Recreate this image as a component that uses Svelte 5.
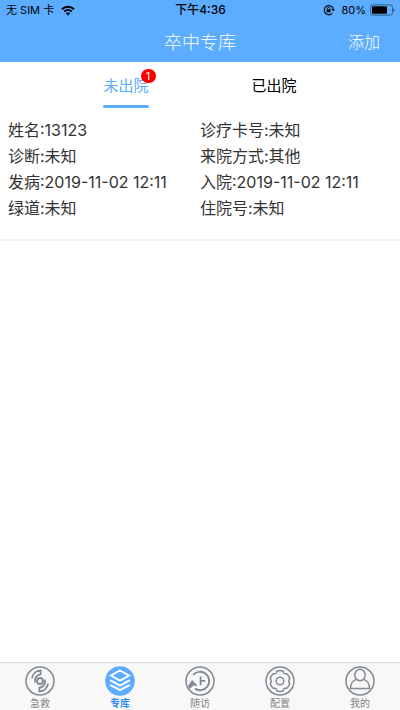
<script>
    let tab = $state('in')
    let page = $state('专库')

    const tabs = [
        { key: 'in', text: '未出院', count: 1 },
        { key: 'out', text: '已出院', count: 0 }
    ]
    const patients = [
        {
            fields: [
                ['姓名', '13123'],
                ['诊疗卡号', '未知'],
                ['诊断', '未知'],
                ['来院方式', '其他'],
                ['发病', '2019-11-02 12:11'],
                ['入院', '2019-11-02 12:11'],
                ['绿道', '未知'],
                ['住院号', '未知']
            ]
        }
    ]
    const pages = ['急救', '专库', '随访', '配置', '我的']
</script>

<div class="app">
    <header>
        <div class="status">
            <div class="carrier">
                <span>无 SIM 卡</span>
                <svg width="14" height="11" viewBox="0 0 14 11" fill="none" stroke="#000" stroke-width="2">
                    <path d="M1 4.2a8.6 8.6 0 0 1 12 0" />
                    <path d="M3.3 6.6a5.3 5.3 0 0 1 7.4 0" />
                    <path d="M7 10.6 4.8 8.4a3.2 3.2 0 0 1 4.4 0z" fill="#000" stroke="none" />
                </svg>
            </div>
            <div class="clock">下午4:36</div>
            <div class="power">
                <svg class="lock" width="12" height="12" viewBox="0 0 12 12" fill="none" stroke="#000">
                    <path d="M9.2 9.4A4.6 4.6 0 1 1 10.3 5" stroke-width="1.1" />
                    <path d="M8.6 5h3.2l-1.6 2.4z" fill="#000" stroke="none" />
                    <path d="M3.6 5.4h4v3h-4z" fill="#000" stroke="none" />
                    <path d="M4.4 5.6V4.5a1.2 1.2 0 0 1 2.4 0v1.1" stroke-width=".9" />
                </svg>
                <span>80%</span>
                <svg width="25" height="12" viewBox="0 0 25 12">
                    <rect x=".5" y=".8" width="22" height="10.4" rx="2.6" fill="none" stroke="#2f587f" stroke-width=".9" />
                    <rect x="2" y="2.3" width="15" height="7.4" rx="1" />
                    <path d="M23.4 4.2q1.4.6 1.4 1.8t-1.4 1.8z" fill="#2f587f" />
                </svg>
            </div>
        </div>
        <div class="nav">
            <h1>卒中专库</h1>
            <button class="add">添加</button>
        </div>
    </header>

    <div class="tabs">
        {#each tabs as item}
            <button class="tab" class:active={tab === item.key} onclick={() => (tab = item.key)}>
                <span class="label">
                    {item.text}
                    {#if item.count}
                        <span class="badge">{item.count}</span>
                    {/if}
                </span>
            </button>
        {/each}
    </div>

    <main>
        {#if tab === 'in'}
            {#each patients as patient}
                <div class="patient">
                    {#each patient.fields as [name, value]}
                        <div>{name}:{value}</div>
                    {/each}
                </div>
            {/each}
        {/if}
    </main>

    <footer>
        {#each pages as name, i}
            <button class="item" class:current={page === name} onclick={() => (page = name)}>
                <svg width="30" height="30" viewBox="0 0 30 30" fill="none" stroke="currentColor" stroke-width="1.5">
                    <circle cx="15" cy="15" r="14" fill={page === name ? 'currentColor' : 'none'} />
                    {#if i === 0}
                        <circle cx="15" cy="15" r="2.9" stroke-width="2" />
                        {#each [0, 180] as angle}
                            <path
                                d="M7 12.4C7.6 8 11 4.8 15.6 4.4V8.2C11.4 9 9.2 12 10.2 16.4"
                                stroke-width="1.9"
                                stroke-linejoin="round"
                                transform="rotate({angle} 15 15)"
                            />
                        {/each}
                    {:else if i === 1}
                        <g class="layers" stroke-width="2">
                            <path d="M15 4.5 24 9.5 15 14.5 6 9.5z" />
                            <path d="M5 14.2l10 5.4 10-5.4" />
                            <path d="M5 18.8l10 5.4 10-5.4" />
                        </g>
                    {:else if i === 2}
                        <path d="M8 9A9.2 9.2 0 1 1 9.8 22.6" stroke-width="1.9" />
                        <path d="M15.6 10.6v8.6M15.6 14.9h4.6" stroke-width="1.8" />
                        <path d="M7.2 14.6 12 19.4 8.2 19.2 5 22.4 3.4 19.8z" fill="currentColor" stroke-width=".8" />
                    {:else if i === 3}
                        <circle cx="15" cy="15" r="3.8" />
                        <path
                            d="M11.8 5.2Q15 4 18.2 5.2Q18.4 8.6 21.6 7.6Q24 9.6 24.9 12.4Q22.4 15 24.9 17.6Q24 20.4 21.6 22.4Q18.4 21.4 18.2 24.8Q15 26 11.8 24.8Q11.6 21.4 8.4 22.4Q6 20.4 5.1 17.6Q7.6 15 5.1 12.4Q6 9.6 8.4 7.6Q11.6 8.6 11.8 5.2z"
                            stroke-linejoin="round"
                        />
                    {:else}
                        <ellipse cx="15" cy="9" rx="5.2" ry="5.8" />
                        <path d="M11.4 13.4c-4 1.4-6 4.6-6 9h19.2c0-4.4-2-7.6-6-9" stroke-linejoin="round" />
                    {/if}
                </svg>
                <span>{name}</span>
            </button>
        {/each}
    </footer>
</div>

<style>
    :global(body) {
        margin: 0;
        background: #fff;
    }
    .app {
        display: flex;
        flex-direction: column;
        min-height: 100vh;
        font-family: Inter, "Noto Sans CJK SC", sans-serif;
        color: #333;
    }
    button {
        margin: 0;
        padding: 0;
        border: 0;
        background: none;
        font: inherit;
        color: inherit;
        cursor: pointer;
    }
    header {
        background: #5cacff;
    }
    .status {
        display: grid;
        grid-template-columns: 1fr auto 1fr;
        align-items: center;
        height: 20px;
        padding: 0 5px 0 6px;
        font-size: 11px;
        line-height: 20px;
        color: #000;
    }
    .carrier,
    .power {
        display: flex;
        align-items: center;
        gap: 7px;
    }
    .power {
        justify-content: flex-end;
        gap: 4px;
    }
    .lock {
        margin-right: 2px;
    }
    .clock {
        font-size: 12px;
        font-weight: 500;
    }
    .nav {
        display: grid;
        grid-template-columns: 1fr auto 1fr;
        align-items: center;
        height: 42px;
        padding: 0 20px;
        color: #fff;
    }
    h1 {
        grid-column: 2;
        margin: 0;
        font-size: 18px;
        font-weight: 300;
    }
    .add {
        justify-self: end;
        font-size: 16px;
        font-weight: 300;
    }
    .tabs {
        display: flex;
        padding: 0 13%;
    }
    .tab {
        flex: 1;
        font-size: 15px;
        color: #000;
    }
    .label {
        position: relative;
        display: inline-block;
        height: 46px;
        line-height: 47px;
    }
    .active {
        color: #5cacff;
    }
    .active .label::after {
        content: "";
        position: absolute;
        right: 0;
        bottom: 0;
        left: 0;
        height: 3px;
        border-radius: 2px;
        background: #5cacff;
    }
    .badge {
        position: absolute;
        top: 7px;
        right: -7px;
        width: 15px;
        height: 14px;
        border-radius: 7px;
        background: #f00;
        color: #fff;
        font-size: 11px;
        line-height: 14px;
        text-align: center;
    }
    main {
        flex: 1;
    }
    .patient {
        display: grid;
        grid-template-columns: 1fr 1fr;
        padding: 9px 0 18px;
        border-bottom: 2px solid #f0f0f0;
        font-size: 16px;
        line-height: 26px;
    }
    .patient div:nth-child(odd) {
        padding-left: 8px;
    }
    footer {
        position: sticky;
        bottom: 0;
        display: flex;
        border-top: 1px solid #dcdcdc;
        background: #f8f8f8;
    }
    .item {
        display: flex;
        flex: 1;
        flex-direction: column;
        align-items: center;
        padding: 3px 0 0;
        font-size: 10px;
        line-height: 14px;
        color: #828a94;
    }
    .item span {
        color: #858585;
    }
    .current {
        color: #5cacff;
    }
    .current span {
        color: #2f8cf0;
        font-weight: 700;
    }
    .current .layers {
        stroke: #fff;
    }
</style>
